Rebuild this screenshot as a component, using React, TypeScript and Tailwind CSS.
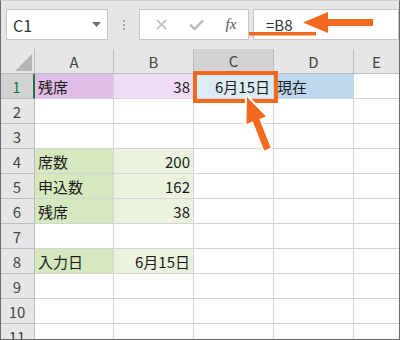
import React from "react";

type Cell = { t?: string; right?: boolean; bg?: string };

const rows: Cell[][] = [
  [
    { t: "残席", bg: "bg-[#e0bce8]" },
    { t: "38", right: true, bg: "bg-[#f0dcf6]" },
    { t: "6月15日", right: true, bg: "bg-[#ddebf7]" },
    { t: "現在", bg: "bg-[#bdd7ee]" },
    {},
  ],
  [{}, {}, {}, {}, {}],
  [{}, {}, {}, {}, {}],
  [
    { t: "席数", bg: "bg-[#d6e9be]" },
    { t: "200", right: true, bg: "bg-[#ebf3df]" },
    {},
    {},
    {},
  ],
  [
    { t: "申込数", bg: "bg-[#d6e9be]" },
    { t: "162", right: true, bg: "bg-[#ebf3df]" },
    {},
    {},
    {},
  ],
  [
    { t: "残席", bg: "bg-[#d6e9be]" },
    { t: "38", right: true, bg: "bg-[#ebf3df]" },
    {},
    {},
    {},
  ],
  [{}, {}, {}, {}, {}],
  [
    { t: "入力日", bg: "bg-[#d6e9be]" },
    { t: "6月15日", right: true, bg: "bg-[#ebf3df]" },
    {},
    {},
    {},
  ],
  [{}, {}, {}, {}, {}],
  [{}, {}, {}, {}, {}],
  [{}, {}, {}, {}, {}],
];

const cols = ["A", "B", "C", "D", "E"];

export default function App() {
  return (
    <div className="relative w-[400px] h-[340px] overflow-hidden bg-white font-['Noto_Sans_CJK_JP',sans-serif] text-[15px] text-[#1a1a1a]">
      {/* toolbar */}
      <div className="h-[49px] bg-[#e6e6e6] flex items-start pt-[9px] pl-[6px]">
        <div className="w-[102px] h-[31px] bg-white border border-[#c6c6c6] flex items-center justify-between pl-[6px] pr-[6px]">
          <span className="text-[16px] text-[#333] leading-none">C1</span>
          <svg width="9" height="5" viewBox="0 0 9 5">
            <path d="M0 0 L9 0 L4.5 5 Z" fill="#6f6f6f" />
          </svg>
        </div>
        <div className="w-[31px] h-[31px] flex flex-col items-center justify-center gap-[2px]">
          <div className="w-[2px] h-[2px] bg-[#a6a6a6]" />
          <div className="w-[2px] h-[2px] bg-[#a6a6a6]" />
          <div className="w-[2px] h-[2px] bg-[#a6a6a6]" />
        </div>
        <div className="w-[110px] h-[31px] bg-white border border-[#c6c6c6] flex items-center">
          <div className="w-[38px] flex justify-center pl-[4px]">
            <svg width="11" height="11" viewBox="0 0 11 11">
              <path d="M1 1 L10 10 M10 1 L1 10" stroke="#b8b8b8" strokeWidth="1.6" />
            </svg>
          </div>
          <div className="w-[36px] flex justify-center">
            <svg width="15" height="11" viewBox="0 0 15 11">
              <path d="M1 5.5 L5.5 10 L14 1.5" stroke="#b8b8b8" strokeWidth="2.4" fill="none" />
            </svg>
          </div>
          <div className="w-[34px] flex justify-center">
            <span className="font-['Liberation_Serif',serif] italic text-[15px] text-[#555] leading-none">
              fx
            </span>
          </div>
        </div>
        <div className="ml-[4px] w-[146px] h-[31px] bg-white border border-[#c6c6c6] flex items-center pl-[12px]">
          <span className="text-[15px] text-[#333] leading-none">=B8</span>
        </div>
      </div>

      {/* grid */}
      <div className="grid grid-cols-[35px_79px_80px_80px_80px_46px]">
        {/* header row */}
        <div className="h-[25px] bg-[#e6e6e6] border-r border-b border-[#bdbdbd] relative">
          <svg className="absolute left-0 top-0" width="35" height="25" viewBox="0 0 35 25">
            <path d="M15 22 L32 22 L32 5 Z" fill="#b6b6b6" />
          </svg>
        </div>
        {cols.map((c) => (
          <div
            key={c}
            className={
              c === "C"
                ? "h-[25px] bg-[#d2d2d2] border-r border-b-2 border-r-[#bdbdbd] border-b-[#217346] flex items-center justify-center text-[#444] leading-none"
                : "h-[25px] bg-[#e6e6e6] border-r border-b border-[#bdbdbd] flex items-center justify-center text-[#444] leading-none"
            }
          >
            {c}
          </div>
        ))}
        {rows.map((r, i) => (
          <React.Fragment key={i}>
            <div
              className={
                i === 0
                  ? "h-[25px] bg-[#d2d2d2] border-r-2 border-b border-r-[#217346] border-b-[#bdbdbd] flex items-center justify-center text-[#217346] leading-none"
                  : "h-[25px] bg-[#e6e6e6] border-r border-b border-[#bdbdbd] flex items-center justify-center text-[#444] leading-none"
              }
            >
              {i + 1}
            </div>
            {r.map((cell, j) => (
              <div
                key={j}
                className={`h-[25px] border-r border-b border-[#d4d4d4] flex items-center px-[3px] leading-none ${
                  cell.right ? "justify-end" : "justify-start"
                } ${cell.bg ?? "bg-white"}`}
              >
                {cell.t}
              </div>
            ))}
          </React.Fragment>
        ))}
      </div>

      {/* annotations */}
      <svg
        className="absolute left-0 top-0 pointer-events-none"
        width="400"
        height="340"
        viewBox="0 0 400 340"
      >
        <rect x="249" y="32" width="67" height="3.5" fill="#f36a1f" />
        <polygon
          points="303,22.5 328,12 328,19 373,19 373,26 328,26 328,33"
          fill="#f36a1f"
          stroke="#ffffff"
          strokeWidth="4"
          strokeLinejoin="round"
          paintOrder="stroke"
        />
        <rect x="195" y="73" width="81" height="28" fill="none" stroke="#f36a1f" strokeWidth="4" />
        <g transform="translate(247 97) rotate(68.6)">
          <polygon
            points="0,0 25,-10.5 25,-3.5 56,-3.5 56,3.5 25,3.5 25,10.5"
            fill="#f36a1f"
            stroke="#ffffff"
            strokeWidth="4"
            strokeLinejoin="round"
            paintOrder="stroke"
          />
        </g>
      </svg>

      {/* outer frame */}
      <div className="absolute inset-0 border border-[#6a6a6a] border-t-[#cfcfcf] pointer-events-none" />
    </div>
  );
}
